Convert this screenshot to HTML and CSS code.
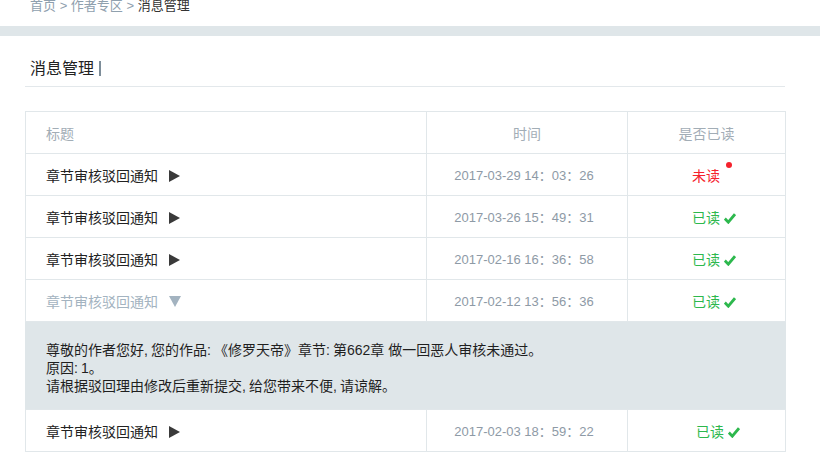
FILE: index.html
```html
<!DOCTYPE html>
<html lang="zh">
<head>
<meta charset="utf-8">
<link rel="stylesheet" href="styles.css">
</head>
<body>
<div class="crumbs"><a class="crumb-link">首页</a> &gt; <a class="crumb-link">作者专区</a> &gt; <span class="crumb-current">消息管理</span></div>
<div class="topbar"></div>
<main class="main">
  <h1 class="page-title"><span class="title-text">消息管理</span></h1>
  <table class="msg-table">
    <colgroup><col class="c1"><col class="c2"><col class="c3"></colgroup>
    <thead>
      <tr><th class="th-title">标题</th><th>时间</th><th>是否已读</th></tr>
    </thead>
    <tbody>
      <tr>
        <td class="td-title">章节审核驳回通知<svg class="tri" width="11" height="12" viewBox="0 0 11 12"><polygon points="0,0 11,6 0,12" /></svg></td>
        <td class="td-time">2017-03-29 14：03：26</td>
        <td class="td-status"><span class="unread">未读<i class="dot"></i></span></td>
      </tr>
      <tr>
        <td class="td-title">章节审核驳回通知<svg class="tri" width="11" height="12" viewBox="0 0 11 12"><polygon points="0,0 11,6 0,12" /></svg></td>
        <td class="td-time">2017-03-26 15：49：31</td>
        <td class="td-status"><span class="read">已读<svg class="check" width="12" height="11" viewBox="0 0 12 11"><path d="M0.8 5.6 L4.3 9.2 L11 1.2"/></svg></span></td>
      </tr>
      <tr>
        <td class="td-title">章节审核驳回通知<svg class="tri" width="11" height="12" viewBox="0 0 11 12"><polygon points="0,0 11,6 0,12" /></svg></td>
        <td class="td-time">2017-02-16 16：36：58</td>
        <td class="td-status"><span class="read">已读<svg class="check" width="12" height="11" viewBox="0 0 12 11"><path d="M0.8 5.6 L4.3 9.2 L11 1.2"/></svg></span></td>
      </tr>
      <tr class="open">
        <td class="td-title">章节审核驳回通知<svg class="tri tri-down" width="12" height="11" viewBox="0 0 12 11"><polygon points="0,0 12,0 6,11" /></svg></td>
        <td class="td-time">2017-02-12 13：56：36</td>
        <td class="td-status"><span class="read">已读<svg class="check" width="12" height="11" viewBox="0 0 12 11"><path d="M0.8 5.6 L4.3 9.2 L11 1.2"/></svg></span></td>
      </tr>
      <tr class="detail-row">
        <td colspan="3" class="detail">尊敬的作者您好<span class="hw">,</span>您的作品<span class="hw">:</span>《修罗天帝》章节<span class="hw">:</span>第662章 做一回恶人审核未通过。<br>原因<span class="hw">:</span>1。<br>请根据驳回理由修改后重新提交<span class="hw">,</span>给您带来不便<span class="hw">,</span>请谅解。</td>
      </tr>
      <tr>
        <td class="td-title">章节审核驳回通知<svg class="tri" width="11" height="12" viewBox="0 0 11 12"><polygon points="0,0 11,6 0,12" /></svg></td>
        <td class="td-time">2017-02-03 18：59：22</td>
        <td class="td-status"><span class="read read-last">已读<svg class="check" width="12" height="11" viewBox="0 0 12 11"><path d="M0.8 5.6 L4.3 9.2 L11 1.2"/></svg></span></td>
      </tr>
    </tbody>
  </table>
</main>
</body>
</html>
```

FILE: styles.css
```css
* { box-sizing: border-box; }
html, body { margin: 0; padding: 0; background: #fff; overflow: hidden; }
body {
  font-family: "Liberation Sans", "Noto Sans CJK SC", sans-serif;
  color: #333;
}
.crumbs {
  margin-top: -2px;
  height: 28px;
  padding-left: 30px;
  font-size: 13px;
  line-height: 16px;
  color: #8fa0ae;
}
.crumb-link { color: #8fa0ae; text-decoration: none; }
.crumb-current { color: #333; }
.topbar { height: 10px; background: #dfe6e9; }
.main { width: 760px; margin-left: 25px; }
.page-title {
  margin: 0;
  height: 51px;
  padding: 23px 0 0 5px;
  font-size: 16px;
  font-weight: normal;
  line-height: 20px;
  color: #222;
  border-bottom: 1px solid #e3e8eb;
}
.title-text {
  display: inline-block;
  padding-right: 5px;
  border-right: 2px solid #7d8d99;
  line-height: 15px;
}
.msg-table {
  margin-top: 24px;
  width: 760px;
  border-collapse: collapse;
  table-layout: fixed;
  font-size: 14px;
}
.c1 { width: 401px; }
.c2 { width: 201px; }
.c3 { width: 158px; }
.msg-table th, .msg-table td {
  border: 1px solid #e1e7ea;
  height: 42px;
  padding: 0;
  vertical-align: middle;
}
.msg-table th {
  font-weight: normal;
  color: #a2adb6;
  text-align: center;
  font-size: 14px;
}
.msg-table th.th-title { text-align: left; padding-left: 20px; }
.td-title { padding-left: 20px !important; color: #222; }
.tri { margin-left: 11px; vertical-align: -1px; fill: #3a3a3a; }
.open .td-title { color: #a3b3c0; }
.tri-down { fill: #a3b3c0; margin-left: 11px; vertical-align: 0; }
.td-time { text-align: center; color: #8e9aa6; font-size: 13px; padding-right: 6px !important; }
.td-status { text-align: left; padding-left: 64px !important; }
.unread { color: #f5222d; position: relative; }
.dot {
  position: absolute;
  right: -12px;
  top: -6px;
  width: 6px;
  height: 6px;
  border-radius: 50%;
  background: #f5222d;
}
.read { color: #2db84d; }
.read-last { margin-left: 4px; }
.check {
  fill: none;
  stroke: #2db84d;
  stroke-width: 2.8;
  margin-left: 4px;
  vertical-align: -1px;
}
.detail-row td.detail {
  height: auto;
  background: #dfe6e9;
  border-left-color: #dfe6e9;
  border-right-color: #dfe6e9;
  padding: 19px 20px 14px 20px;
  line-height: 18px;
  color: #1f1f1f;
  font-size: 14px;
}
.hw { display: inline-block; width: 7px; }
```
